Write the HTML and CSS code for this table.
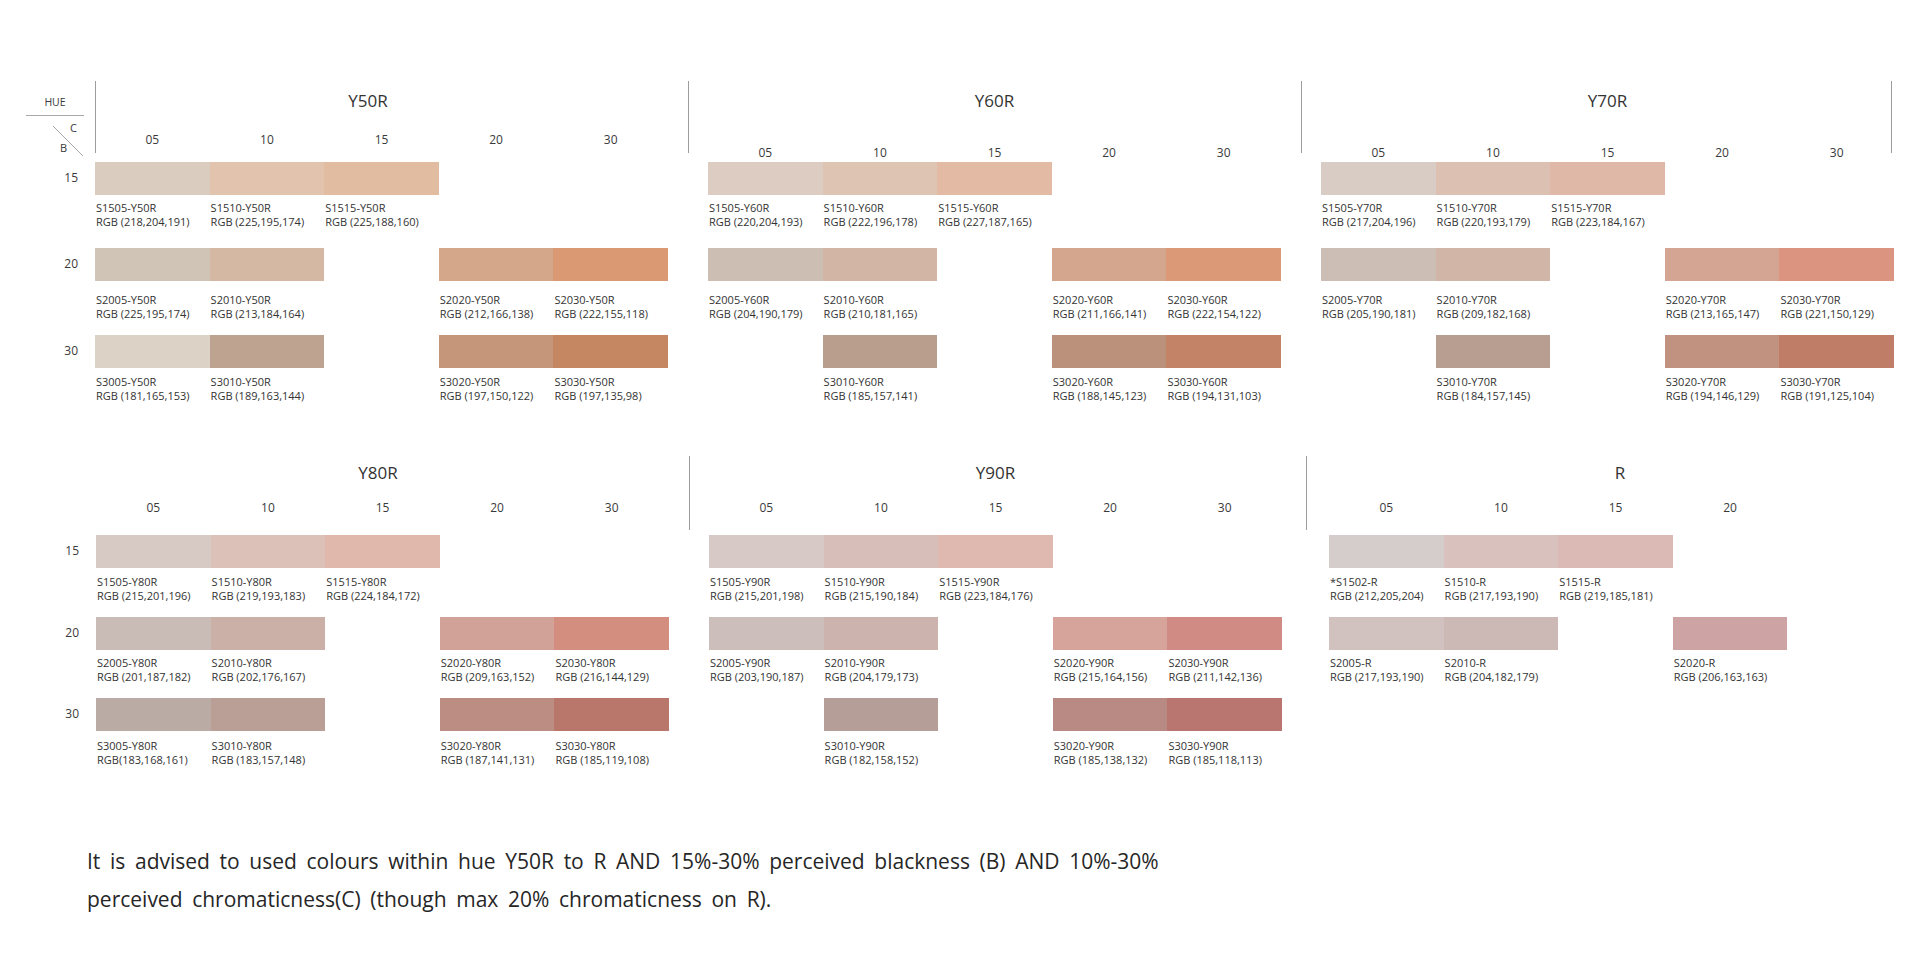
FILE: index.html
```html
<!DOCTYPE html>
<html lang="en">
<head>
<meta charset="utf-8">
<title>Colour range</title>
<link rel="stylesheet" href="styles.css">
</head>
<body>
<main class="page">
  <section class="band band-top">
    <div class="key row-h">
      <div class="hue">HUE</div>
      <div class="cb">
        <svg class="diag" width="58" height="40" viewBox="0 0 58 40"><line x1="27" y1="10" x2="57" y2="40" stroke="#a6a6a6" stroke-width="1"/></svg>
        <span class="kc">C</span><span class="kb">B</span>
      </div>
    </div>
    <div class="vline row-h col-a start"></div>
    <div class="vline row-h gap-a"></div>
    <div class="vline row-h gap-b"></div>
    <div class="vline row-h col-c end"></div>

    <div class="head row-h col-a first">
      <div class="title">Y50R</div>
      <div class="cols"><span>05</span><span>10</span><span>15</span><span>20</span><span>30</span></div>
    </div>
    <div class="head row-h col-b">
      <div class="title">Y60R</div>
      <div class="cols"><span>05</span><span>10</span><span>15</span><span>20</span><span>30</span></div>
    </div>
    <div class="head row-h col-c">
      <div class="title">Y70R</div>
      <div class="cols"><span>05</span><span>10</span><span>15</span><span>20</span><span>30</span></div>
    </div>

    <div class="rlabel row-1">15</div>
    <div class="rlabel row-2">20</div>
    <div class="rlabel row-3">30</div>

    <div class="swrow row-1 col-a">
      <div class="cell"><div class="sw" style="background:rgb(218,204,191)"></div><p class="cap">S1505-Y50R<br>RGB (218,204,191)</p></div>
      <div class="cell"><div class="sw" style="background:rgb(225,195,174)"></div><p class="cap">S1510-Y50R<br>RGB (225,195,174)</p></div>
      <div class="cell"><div class="sw" style="background:rgb(225,188,160)"></div><p class="cap">S1515-Y50R<br>RGB (225,188,160)</p></div>
      <div class="cell"></div><div class="cell"></div>
    </div>
    <div class="swrow row-2 col-a">
      <div class="cell"><div class="sw" style="background:rgb(208,196,182)"></div><p class="cap">S2005-Y50R<br>RGB (225,195,174)</p></div>
      <div class="cell"><div class="sw" style="background:rgb(213,184,164)"></div><p class="cap">S2010-Y50R<br>RGB (213,184,164)</p></div>
      <div class="cell"></div>
      <div class="cell"><div class="sw" style="background:rgb(212,166,138)"></div><p class="cap">S2020-Y50R<br>RGB (212,166,138)</p></div>
      <div class="cell"><div class="sw" style="background:rgb(219,153,115)"></div><p class="cap">S2030-Y50R<br>RGB (222,155,118)</p></div>
    </div>
    <div class="swrow row-3 col-a">
      <div class="cell"><div class="sw" style="background:rgb(221,210,198)"></div><p class="cap">S3005-Y50R<br>RGB (181,165,153)</p></div>
      <div class="cell"><div class="sw" style="background:rgb(189,163,144)"></div><p class="cap">S3010-Y50R<br>RGB (189,163,144)</p></div>
      <div class="cell"></div>
      <div class="cell"><div class="sw" style="background:rgb(197,150,122)"></div><p class="cap">S3020-Y50R<br>RGB (197,150,122)</p></div>
      <div class="cell"><div class="sw" style="background:rgb(197,135,98)"></div><p class="cap">S3030-Y50R<br>RGB (197,135,98)</p></div>
    </div>

    <div class="swrow row-1 col-b">
      <div class="cell"><div class="sw" style="background:rgb(220,204,193)"></div><p class="cap">S1505-Y60R<br>RGB (220,204,193)</p></div>
      <div class="cell"><div class="sw" style="background:rgb(222,196,178)"></div><p class="cap">S1510-Y60R<br>RGB (222,196,178)</p></div>
      <div class="cell"><div class="sw" style="background:rgb(227,187,165)"></div><p class="cap">S1515-Y60R<br>RGB (227,187,165)</p></div>
      <div class="cell"></div><div class="cell"></div>
    </div>
    <div class="swrow row-2 col-b">
      <div class="cell"><div class="sw" style="background:rgb(204,190,179)"></div><p class="cap">S2005-Y60R<br>RGB (204,190,179)</p></div>
      <div class="cell"><div class="sw" style="background:rgb(210,181,165)"></div><p class="cap">S2010-Y60R<br>RGB (210,181,165)</p></div>
      <div class="cell"></div>
      <div class="cell"><div class="sw" style="background:rgb(211,166,141)"></div><p class="cap">S2020-Y60R<br>RGB (211,166,141)</p></div>
      <div class="cell"><div class="sw" style="background:rgb(220,153,120)"></div><p class="cap">S2030-Y60R<br>RGB (222,154,122)</p></div>
    </div>
    <div class="swrow row-3 col-b">
      <div class="cell"></div>
      <div class="cell"><div class="sw" style="background:rgb(185,157,141)"></div><p class="cap">S3010-Y60R<br>RGB (185,157,141)</p></div>
      <div class="cell"></div>
      <div class="cell"><div class="sw" style="background:rgb(188,145,123)"></div><p class="cap">S3020-Y60R<br>RGB (188,145,123)</p></div>
      <div class="cell"><div class="sw" style="background:rgb(194,131,103)"></div><p class="cap">S3030-Y60R<br>RGB (194,131,103)</p></div>
    </div>

    <div class="swrow row-1 col-c">
      <div class="cell"><div class="sw" style="background:rgb(217,204,196)"></div><p class="cap">S1505-Y70R<br>RGB (217,204,196)</p></div>
      <div class="cell"><div class="sw" style="background:rgb(220,193,179)"></div><p class="cap">S1510-Y70R<br>RGB (220,193,179)</p></div>
      <div class="cell"><div class="sw" style="background:rgb(223,184,167)"></div><p class="cap">S1515-Y70R<br>RGB (223,184,167)</p></div>
      <div class="cell"></div><div class="cell"></div>
    </div>
    <div class="swrow row-2 col-c">
      <div class="cell"><div class="sw" style="background:rgb(205,190,181)"></div><p class="cap">S2005-Y70R<br>RGB (205,190,181)</p></div>
      <div class="cell"><div class="sw" style="background:rgb(209,182,168)"></div><p class="cap">S2010-Y70R<br>RGB (209,182,168)</p></div>
      <div class="cell"></div>
      <div class="cell"><div class="sw" style="background:rgb(213,165,147)"></div><p class="cap">S2020-Y70R<br>RGB (213,165,147)</p></div>
      <div class="cell"><div class="sw" style="background:rgb(219,148,127)"></div><p class="cap">S2030-Y70R<br>RGB (221,150,129)</p></div>
    </div>
    <div class="swrow row-3 col-c">
      <div class="cell"></div>
      <div class="cell"><div class="sw" style="background:rgb(184,157,145)"></div><p class="cap">S3010-Y70R<br>RGB (184,157,145)</p></div>
      <div class="cell"></div>
      <div class="cell"><div class="sw" style="background:rgb(194,146,129)"></div><p class="cap">S3020-Y70R<br>RGB (194,146,129)</p></div>
      <div class="cell"><div class="sw" style="background:rgb(191,125,104)"></div><p class="cap">S3030-Y70R<br>RGB (191,125,104)</p></div>
    </div>
  </section>

  <section class="band band-bottom">
    <div class="vline row-h gap-a"></div>
    <div class="vline row-h gap-b shift"></div>

    <div class="head row-h col-a y80">
      <div class="title">Y80R</div>
      <div class="cols"><span>05</span><span>10</span><span>15</span><span>20</span><span>30</span></div>
    </div>
    <div class="head row-h col-b">
      <div class="title">Y90R</div>
      <div class="cols"><span>05</span><span>10</span><span>15</span><span>20</span><span>30</span></div>
    </div>
    <div class="head row-h col-c rblock">
      <div class="title">R</div>
      <div class="cols"><span>05</span><span>10</span><span>15</span><span>20</span><span></span></div>
    </div>

    <div class="rlabel row-1">15</div>
    <div class="rlabel row-2">20</div>
    <div class="rlabel row-3">30</div>

    <div class="swrow row-1 col-a">
      <div class="cell"><div class="sw" style="background:rgb(215,201,196)"></div><p class="cap">S1505-Y80R<br>RGB (215,201,196)</p></div>
      <div class="cell"><div class="sw" style="background:rgb(219,193,183)"></div><p class="cap">S1510-Y80R<br>RGB (219,193,183)</p></div>
      <div class="cell"><div class="sw" style="background:rgb(224,184,172)"></div><p class="cap">S1515-Y80R<br>RGB (224,184,172)</p></div>
      <div class="cell"></div><div class="cell"></div>
    </div>
    <div class="swrow row-2 col-a">
      <div class="cell"><div class="sw" style="background:rgb(201,187,182)"></div><p class="cap">S2005-Y80R<br>RGB (201,187,182)</p></div>
      <div class="cell"><div class="sw" style="background:rgb(202,176,167)"></div><p class="cap">S2010-Y80R<br>RGB (202,176,167)</p></div>
      <div class="cell"></div>
      <div class="cell"><div class="sw" style="background:rgb(209,163,152)"></div><p class="cap">S2020-Y80R<br>RGB (209,163,152)</p></div>
      <div class="cell"><div class="sw" style="background:rgb(212,142,127)"></div><p class="cap">S2030-Y80R<br>RGB (216,144,129)</p></div>
    </div>
    <div class="swrow row-3 col-a">
      <div class="cell"><div class="sw" style="background:rgb(186,171,164)"></div><p class="cap">S3005-Y80R<br>RGB(183,168,161)</p></div>
      <div class="cell"><div class="sw" style="background:rgb(185,159,150)"></div><p class="cap">S3010-Y80R<br>RGB (183,157,148)</p></div>
      <div class="cell"></div>
      <div class="cell"><div class="sw" style="background:rgb(187,141,131)"></div><p class="cap">S3020-Y80R<br>RGB (187,141,131)</p></div>
      <div class="cell"><div class="sw" style="background:rgb(185,119,108)"></div><p class="cap">S3030-Y80R<br>RGB (185,119,108)</p></div>
    </div>

    <div class="swrow row-1 col-b">
      <div class="cell"><div class="sw" style="background:rgb(215,201,198)"></div><p class="cap">S1505-Y90R<br>RGB (215,201,198)</p></div>
      <div class="cell"><div class="sw" style="background:rgb(215,190,184)"></div><p class="cap">S1510-Y90R<br>RGB (215,190,184)</p></div>
      <div class="cell"><div class="sw" style="background:rgb(223,184,176)"></div><p class="cap">S1515-Y90R<br>RGB (223,184,176)</p></div>
      <div class="cell"></div><div class="cell"></div>
    </div>
    <div class="swrow row-2 col-b">
      <div class="cell"><div class="sw" style="background:rgb(203,190,187)"></div><p class="cap">S2005-Y90R<br>RGB (203,190,187)</p></div>
      <div class="cell"><div class="sw" style="background:rgb(204,179,173)"></div><p class="cap">S2010-Y90R<br>RGB (204,179,173)</p></div>
      <div class="cell"></div>
      <div class="cell"><div class="sw" style="background:rgb(215,164,156)"></div><p class="cap">S2020-Y90R<br>RGB (215,164,156)</p></div>
      <div class="cell"><div class="sw" style="background:rgb(207,139,132)"></div><p class="cap">S2030-Y90R<br>RGB (211,142,136)</p></div>
    </div>
    <div class="swrow row-3 col-b">
      <div class="cell"></div>
      <div class="cell"><div class="sw" style="background:rgb(182,158,152)"></div><p class="cap">S3010-Y90R<br>RGB (182,158,152)</p></div>
      <div class="cell"></div>
      <div class="cell"><div class="sw" style="background:rgb(185,138,132)"></div><p class="cap">S3020-Y90R<br>RGB (185,138,132)</p></div>
      <div class="cell"><div class="sw" style="background:rgb(185,118,113)"></div><p class="cap">S3030-Y90R<br>RGB (185,118,113)</p></div>
    </div>

    <div class="swrow row-1 col-c rblock">
      <div class="cell"><div class="sw" style="background:rgb(212,205,204)"></div><p class="cap">*S1502-R<br>RGB (212,205,204)</p></div>
      <div class="cell"><div class="sw" style="background:rgb(217,193,190)"></div><p class="cap">S1510-R<br>RGB (217,193,190)</p></div>
      <div class="cell"><div class="sw" style="background:rgb(219,185,181)"></div><p class="cap">S1515-R<br>RGB (219,185,181)</p></div>
      <div class="cell"></div><div class="cell"></div>
    </div>
    <div class="swrow row-2 col-c rblock">
      <div class="cell"><div class="sw" style="background:rgb(209,193,191)"></div><p class="cap">S2005-R<br>RGB (217,193,190)</p></div>
      <div class="cell"><div class="sw" style="background:rgb(204,184,181)"></div><p class="cap">S2010-R<br>RGB (204,182,179)</p></div>
      <div class="cell"></div>
      <div class="cell"><div class="sw" style="background:rgb(206,163,163)"></div><p class="cap">S2020-R<br>RGB (206,163,163)</p></div>
      <div class="cell"></div>
    </div>
  </section>

  <p class="note">It is advised to used colours within hue Y50R to R AND 15%-30% perceived blackness (B) AND 10%-30%<br>perceived chromaticness(C) (though max 20% chromaticness on R).</p>
</main>
</body>
</html>
```

FILE: styles.css
```css
* {
  box-sizing: border-box;
  margin: 0;
  padding: 0;
}

html, body {
  background: #ffffff;
}

body {
  margin: 0;
  width: 1920px;
  font-family: "Open Sans", "Noto Sans", sans-serif;
  color: #333333;
}

.band {
  display: grid;
  grid-template-columns: 95px 573px 40px 573px 40px 573px;
}

.band-top {
  margin-top: 80px;
  grid-template-rows: 82px auto auto auto;
}

.band-bottom {
  margin-top: 52px;
  padding-left: 1px;
  grid-template-rows: 80px auto auto auto;
}

.col-a { grid-column: 2; }
.col-b { grid-column: 4; }
.col-c { grid-column: 6; }
.gap-a { grid-column: 3; }
.gap-b { grid-column: 5; }

.row-h { grid-row: 1; }
.row-1 { grid-row: 2; }
.row-2 { grid-row: 3; }
.row-3 { grid-row: 4; }

/* HUE / C / B key */
.key {
  grid-column: 1;
  margin-left: 26px;
  margin-top: 15px;
  width: 58px;
  align-self: start;
}

.hue {
  font-size: 10.5px;
  line-height: 14px;
  text-align: center;
  padding-bottom: 6px;
  border-bottom: 1px solid #a8a8a8;
  color: #3a3a3a;
}

.cb {
  position: relative;
  height: 40px;
}

.diag {
  display: block;
}

.kc, .kb {
  position: absolute;
  font-size: 11px;
  line-height: 14px;
  color: #3a3a3a;
}

.kc { left: 44px; top: 5px; }
.kb { left: 34px; top: 25px; }

/* separators */
.vline {
  width: 1px;
  height: 72px;
  margin-top: 1px;
  background: #9c9c9c;
  align-self: start;
  justify-self: center;
}

.vline.start { justify-self: start; }
.vline.end { justify-self: end; margin-right: 2px; }

.band-bottom .vline { height: 74px; }
.band-bottom .vline.shift { margin-left: 8px; }

/* block headers */
.head {
  text-align: center;
  align-self: start;
}

.title {
  font-size: 17px;
  line-height: 24px;
  margin-top: 9px;
  color: #333333;
}

.cols {
  display: grid;
  grid-template-columns: repeat(5, 1fr);
  font-size: 12px;
  line-height: 16px;
  margin-top: 32px;
  color: #3a3a3a;
}

.head.first .title { padding-right: 27px; }
.head.first .cols { margin-top: 19px; }

.band-bottom .title { margin-top: 6px; }
.band-bottom .cols { margin-top: 15px; }
.head.y80 .title { padding-right: 9px; }
.head.rblock .title { padding-left: 9px; }

.rblock {
  margin-left: 7px;
  width: 573px;
}

/* row labels */
.rlabel {
  grid-column: 1;
  align-self: start;
  height: 33px;
  font-size: 12px;
  line-height: 31px;
  text-align: right;
  padding-right: 17px;
  color: #3a3a3a;
}

/* swatch rows */
.swrow {
  display: grid;
  grid-template-columns: repeat(5, 1fr);
  align-self: start;
}

.sw {
  height: 33px;
}

.cap {
  font-size: 11px;
  line-height: 14px;
  white-space: nowrap;
  padding-left: 1px;
  color: #333333;
}

.band-top .swrow.row-1 { padding-bottom: 19px; }
.band-top .row-1 .cap { margin-top: 6px; }
.band-top .swrow.row-2 { padding-bottom: 14px; }
.band-top .row-2 .cap { margin-top: 12px; }
.band-top .row-3 .cap { margin-top: 7px; }

.band-bottom .swrow.row-1 { padding-bottom: 14px; }
.band-bottom .row-1 .cap { margin-top: 7px; }
.band-bottom .swrow.row-2 { padding-bottom: 14px; }
.band-bottom .row-2 .cap { margin-top: 6px; }
.band-bottom .row-3 .cap { margin-top: 8px; }

/* footnote */
.note {
  margin: 75px 0 0 87px;
  font-size: 21px;
  line-height: 38px;
  letter-spacing: 0;
  word-spacing: 4.2px;
  white-space: nowrap;
  color: #262626;
}
```
